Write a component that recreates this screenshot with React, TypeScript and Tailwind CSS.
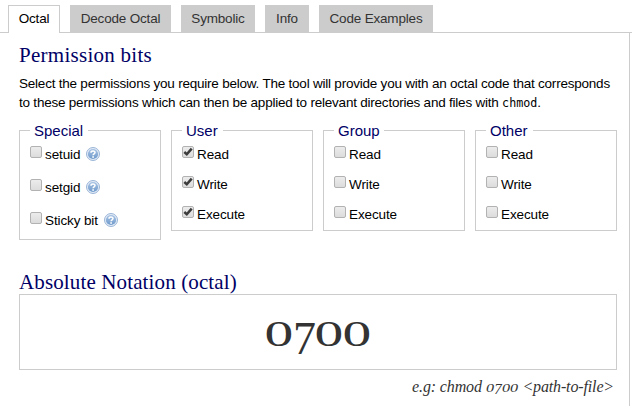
import React from "react";

const SANS = "font-['Liberation_Sans',Arial,sans-serif]";
const SERIF = "font-['Liberation_Serif',serif]";

function HelpIcon() {
  return (
    <svg className="mt-px ml-[6px] h-[14px] w-[14px] shrink-0" viewBox="0 0 14 14">
      <defs>
        <linearGradient id="help" x1="0" y1="0" x2="0" y2="1">
          <stop offset="0" stopColor="#a9c4e4" />
          <stop offset="1" stopColor="#6f9acb" />
        </linearGradient>
      </defs>
      <circle cx="7" cy="7" r="6.5" fill="#e4edf7" stroke="#8eadd2" strokeWidth="0.9" />
      <circle cx="7" cy="7" r="5.1" fill="url(#help)" />
      <path d="M5 5.7C5 3.5 9 3.5 9 5.6C9 7 7.1 6.9 7.1 8.3" fill="none" stroke="#fff" strokeWidth="1.5" />
      <rect x="6.3" y="9.2" width="1.6" height="1.6" fill="#fff" />
    </svg>
  );
}

function Box({ checked }: { checked?: boolean }) {
  return (
    <span className="mr-[3px] block h-3 w-3 shrink-0 rounded-[2px] border border-[#b2b2b2] bg-linear-to-b from-[#ececec] to-[#dcdcdc]">
      {checked && (
        <svg className="block h-[10px] w-[10px]" viewBox="0 0 10 10">
          <path d="M1.3 5L3.8 7.3L8.7 1.6" fill="none" stroke="#3c3c3c" strokeWidth="2.5" />
        </svg>
      )}
    </span>
  );
}

type GroupProps = { title: string; legend: string; items: string[]; checked?: boolean; help?: boolean };

function Group({ title, legend, items, checked, help }: GroupProps) {
  return (
    <fieldset className={`w-[142px] shrink-0 border border-[#ccc] pl-[10px] ${help ? "h-[118px]" : "h-[109px]"}`}>
      <legend className={`h-[17px] pl-[4px] text-[15px] leading-[18px] whitespace-nowrap text-[#000066] ${legend}`}>{title}</legend>
      <div className={`flex flex-col pt-[7px] ${help ? "gap-[21px]" : "gap-[18px]"}`}>
        {items.map((item) => (
          <div key={item} className="flex h-3 items-start text-[13.5px] tracking-[-0.12px] whitespace-nowrap">
            <Box checked={checked} />
            <span className="leading-[17px]">{item}</span>
            {help && <HelpIcon />}
          </div>
        ))}
      </div>
    </fieldset>
  );
}

function Zero() {
  return (
    <span className="mt-[3px] inline-flex w-[28px] justify-center">
      <span className="inline-block scale-x-[1.6] text-[36px] leading-[40px]">0</span>
    </span>
  );
}

function SmallZero() {
  return (
    <span className="inline-flex w-[8.5px] justify-center">
      <span className="inline-block scale-x-[1.4] text-[11.5px]">0</span>
    </span>
  );
}

const TABS = [
  { label: "Decode Octal", width: "w-[101px]" },
  { label: "Symbolic", width: "w-[74px]" },
  { label: "Info", width: "w-[44px]" },
  { label: "Code Examples", width: "w-[114px]" },
];

const RWX = ["Read", "Write", "Execute"];

export default function App() {
  return (
    <div className={`h-[406px] w-[632px] overflow-hidden bg-white text-black ${SANS}`}>
      <nav className="flex h-[33px] items-end gap-[10px] border-b border-[#ccc] pl-2 text-[13.5px] leading-[26px] tracking-[-0.18px] whitespace-nowrap">
        <div className="-mb-px h-[28px] w-[52px] border border-b-0 border-[#ccc] bg-white text-center">Octal</div>
        {TABS.map((t) => (
          <div key={t.label} className={`h-[27px] bg-[#ccc] pt-px text-center text-[#333] ${t.width}`}>{t.label}</div>
        ))}
      </nav>
      <main className="h-[373px] w-[630px] border-r border-[#ccc] pl-[19px]">
        <h1 className={`h-[41px] pt-[9px] text-[21px] leading-[26px] tracking-[0.27px] whitespace-nowrap text-[#000066] ${SERIF}`}>Permission bits</h1>
        <p className="h-[48px] text-[13.5px] leading-[19px] tracking-[-0.22px] whitespace-nowrap">
          Select the permissions you require below. The tool will provide you with an octal code that corresponds
          <br />
          to these permissions which can then be applied to relevant directories and files with{" "}
          <code className="font-['DejaVu_Sans_Mono',monospace] text-[11.7px] tracking-normal">chmod</code>.
        </p>
        <div className="flex h-[148px] gap-[10px]">
          <Group title="Special" legend="w-[58px]" items={["setuid", "setgid", "Sticky bit"]} help />
          <Group title="User" legend="w-[41px]" items={RWX} checked />
          <Group title="Group" legend="w-[50px]" items={RWX} />
          <Group title="Other" legend="w-[47px]" items={RWX} />
        </div>
        <h2 className={`h-[24px] text-[21px] leading-[24px] tracking-[0.13px] whitespace-nowrap text-[#000066] ${SERIF}`}>Absolute Notation (octal)</h2>
        <div className={`flex h-[76px] w-[598px] items-center justify-center border border-[#ccc] text-[#333] ${SERIF}`}>
          <Zero />
          <span className="mt-[13px] w-[22px] text-center text-[46px] leading-[40px]">7</span>
          <Zero />
          <Zero />
        </div>
        <p className={`flex h-[34px] w-[595px] items-baseline justify-end pt-[5px] text-[16px] tracking-[-0.14px] whitespace-pre text-[#333] italic ${SERIF}`}>
          <span>e.g: chmod </span>
          <SmallZero />
          <span className="mt-[3px] self-start text-[15px]">7</span>
          <SmallZero />
          <SmallZero />
          <span> &lt;path-to-file&gt;</span>
        </p>
      </main>
    </div>
  );
}
